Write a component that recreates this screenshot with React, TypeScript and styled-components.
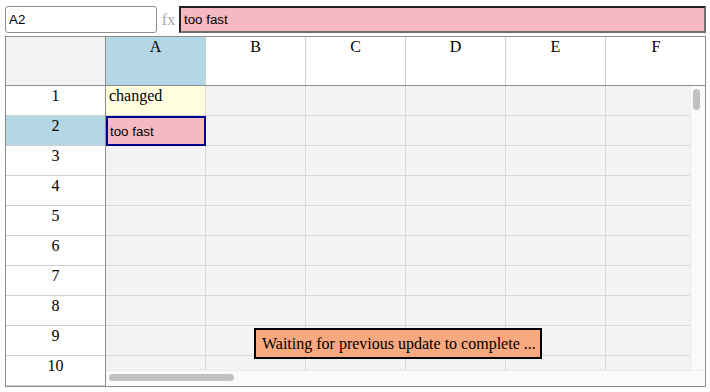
import React from "react";
import styled, { createGlobalStyle } from "styled-components";

const columns = ["A", "B", "C", "D", "E", "F"];
const rows = [1, 2, 3, 4, 5, 6, 7, 8, 9, 10];
const selected = { col: "A", row: 2 };

const GlobalStyle = createGlobalStyle`
  html, body {
    margin: 0;
    background: #ffffff;
  }
  body {
    font-family: "Liberation Serif", "Times New Roman", serif;
    font-size: 16px;
    color: #000;
  }
`;

function App() {
  return (
    <Page>
      <GlobalStyle />
      <FormulaBar>
        <NameBox readOnly value="A2" />
        <Fx>fx</Fx>
        <FormulaInput readOnly value="too fast" />
      </FormulaBar>
      <Sheet>
        <RowHeaderColumn>
          <Corner />
          {rows.map((r) => (
            <RowHeader key={r} $active={r === selected.row}>
              {r}
            </RowHeader>
          ))}
        </RowHeaderColumn>
        <MainColumn>
          <ColumnHeaderRow>
            {columns.map((c) => (
              <ColumnHeader key={c} $active={c === selected.col}>
                {c}
              </ColumnHeader>
            ))}
          </ColumnHeaderRow>
          <BodyArea>
            <Viewport>
              {rows.map((r) => (
                <CellRow key={r}>
                  {columns.map((c) => {
                    if (c === "A" && r === 1)
                      return (
                        <Cell key={c} $bg="#ffffe0">
                          changed
                        </Cell>
                      );
                    if (c === "A" && r === 2)
                      return <Editor key={c}>too fast</Editor>;
                    return <Cell key={c} />;
                  })}
                </CellRow>
              ))}
            </Viewport>
            <VScroll>
              <VThumb />
            </VScroll>
          </BodyArea>
          <HScroll>
            <HThumb />
          </HScroll>
        </MainColumn>
        <Toast>Waiting for previous update to complete ...</Toast>
      </Sheet>
    </Page>
  );
}

const Page = styled.div`
  padding: 6px 4px 0 5px;
`;

const FormulaBar = styled.div`
  display: flex;
  align-items: center;
  height: 27px;
  margin-bottom: 3px;
`;

const NameBox = styled.input`
  box-sizing: border-box;
  width: 152px;
  height: 27px;
  border: 1px solid #8f8f8f;
  border-radius: 3px;
  padding: 1px 3px;
  font-family: "Liberation Sans", Arial, sans-serif;
  font-size: 13.33px;
  color: #000;
  outline: none;
`;

const Fx = styled.span`
  width: 21px;
  text-align: center;
  color: #aaaaaa;
  font-size: 16px;
  padding-left: 1px;
`;

const FormulaInput = styled.input`
  box-sizing: border-box;
  flex: 1;
  height: 27px;
  border: 2px solid;
  border-top-color: #222;
  border-left-color: #222;
  border-right-color: #6f6f6f;
  border-bottom-color: #6f6f6f;
  background: #f7b9c1;
  padding: 1px 3px;
  font-family: "Liberation Sans", Arial, sans-serif;
  font-size: 13.33px;
  color: #000;
  outline: none;
`;

const Sheet = styled.div`
  position: relative;
  display: flex;
  width: 701px;
  height: 351px;
  box-sizing: border-box;
  border: 1px solid #8c8c8c;
  overflow: hidden;
`;

const RowHeaderColumn = styled.div`
  display: flex;
  flex-direction: column;
  width: 100px;
  flex-shrink: 0;
  box-sizing: border-box;
  border-right: 1px solid #8c8c8c;
`;

const Corner = styled.div`
  height: 48px;
  flex-shrink: 0;
  background: #f3f3f3;
  border-bottom: 1px solid #8c8c8c;
`;

const RowHeader = styled.div<{ $active: boolean }>`
  height: 30px;
  flex-shrink: 0;
  box-sizing: border-box;
  padding-top: 1px;
  text-align: center;
  background: ${(p) => (p.$active ? "#b3d7e5" : "#ffffff")};
  border-bottom: 1px solid #d0d0d0;
`;

const MainColumn = styled.div`
  flex: 1;
  display: flex;
  flex-direction: column;
  min-width: 0;
`;

const ColumnHeaderRow = styled.div`
  display: flex;
  height: 48px;
  flex-shrink: 0;
  border-bottom: 1px solid #8c8c8c;
`;

const ColumnHeader = styled.div<{ $active: boolean }>`
  width: 100px;
  flex-shrink: 0;
  box-sizing: border-box;
  padding-top: 1px;
  text-align: center;
  background: ${(p) => (p.$active ? "#b3d7e5" : "#ffffff")};
  border-right: 1px solid #d0d0d0;
  &:last-child {
    border-right: none;
  }
`;

const BodyArea = styled.div`
  display: flex;
  height: 284px;
  flex-shrink: 0;
`;

const Viewport = styled.div`
  flex: 1;
  overflow: hidden;
  background: #f3f3f3;
`;

const CellRow = styled.div`
  display: flex;
  height: 30px;
`;

const Cell = styled.div<{ $bg?: string }>`
  width: 100px;
  flex-shrink: 0;
  box-sizing: border-box;
  padding: 1px 3px 0;
  background: ${(p) => p.$bg ?? "#f3f3f3"};
  border-right: 1px solid #d8d8d8;
  border-bottom: 1px solid #d8d8d8;
  white-space: nowrap;
  overflow: hidden;
`;

const Editor = styled.div`
  width: 100px;
  height: 30px;
  flex-shrink: 0;
  box-sizing: border-box;
  display: flex;
  align-items: center;
  padding: 0 2px;
  background: #f7b9c1;
  border: 2px solid #00008b;
  font-family: "Liberation Sans", Arial, sans-serif;
  font-size: 13.33px;
`;

const VScroll = styled.div`
  width: 15px;
  flex-shrink: 0;
  box-sizing: border-box;
  background: #fafafa;
  border-left: 1px solid #ececec;
  padding: 3px 0 0 2px;
`;

const VThumb = styled.div`
  width: 7px;
  height: 21px;
  border-radius: 4px;
  background: #c1c1c1;
`;

const HScroll = styled.div`
  height: 15px;
  flex-shrink: 0;
  box-sizing: border-box;
  background: #fafafa;
  border-top: 1px solid #ececec;
  padding: 3px 0 0 3px;
`;

const HThumb = styled.div`
  width: 125px;
  height: 7px;
  border-radius: 4px;
  background: #c1c1c1;
`;

const Toast = styled.div`
  position: absolute;
  left: 248px;
  top: 291px;
  box-sizing: border-box;
  height: 31px;
  padding: 5px 4px 0 6px;
  border: 2px solid #000;
  background: #f8a97f;
  white-space: nowrap;
`;

export default App;
